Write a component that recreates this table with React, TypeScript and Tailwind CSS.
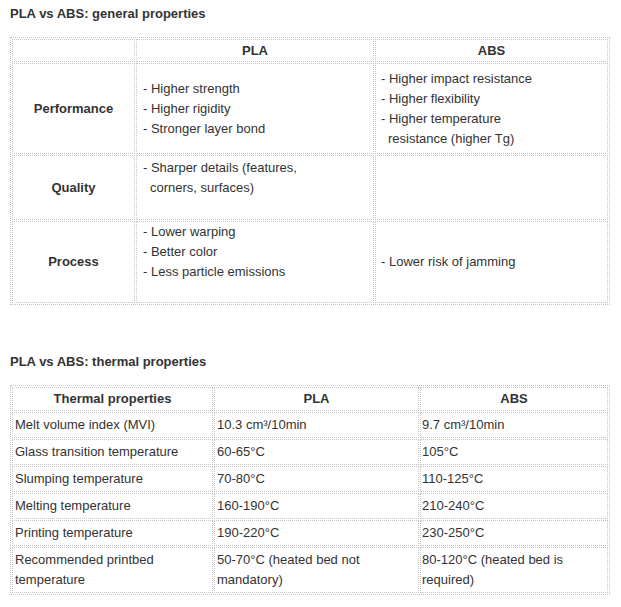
// PLA vs ABS comparison tables — general + thermal properties
const cell = 'border border-dotted border-[#c4c4c4] p-0';

const GENERAL = [
  {
    label: 'Performance',
    height: 'h-[91px]',
    pla: ['- Higher strength', '- Higher rigidity', '- Stronger layer bond'],
    abs: ['- Higher impact resistance', '- Higher flexibility', '- Higher temperature resistance (higher Tg)'],
  },
  {
    label: 'Quality',
    height: 'h-[65px]',
    pla: ['- Sharper details (features, corners, surfaces)', ''],
    abs: [],
  },
  {
    label: 'Process',
    height: 'h-[81px]',
    pla: ['- Lower warping', '- Better color', '- Less particle emissions', ''],
    abs: ['- Lower risk of jamming'],
  },
];

const THERMAL: [string, string, string][] = [
  ['Melt volume index (MVI)', '10.3 cm³/10min', '9.7 cm³/10min'],
  ['Glass transition temperature', '60-65°C', '105°C'],
  ['Slumping temperature', '70-80°C', '110-125°C'],
  ['Melting temperature', '160-190°C', '210-240°C'],
  ['Printing temperature', '190-220°C', '230-250°C'],
  ['Recommended printbed temperature', '50-70°C (heated bed not mandatory)', '80-120°C (heated bed is required)'],
];

function Lines({ items }: { items: string[] }) {
  return (
    <div>
      {items.map((t, i) => (
        <div key={i} className="pl-[7px] -indent-[7px] min-h-[20px]">
          {t}
        </div>
      ))}
    </div>
  );
}

export default function App() {
  return (
    <div className="bg-white text-[#333] text-[13px] leading-[20px] font-['Liberation_Sans',Arial,sans-serif] px-[10px] pt-[4px] pb-[12px]">
      <h2 className="font-bold leading-[20px]">PLA vs ABS: general properties</h2>

      <table className="mt-[13px] w-[600px] table-fixed border-separate border-spacing-[1px] border border-dotted border-[#c4c4c4]">
        <colgroup>
          <col className="w-[123px]" />
          <col className="w-[238px]" />
          <col className="w-[233px]" />
        </colgroup>
        <tbody>
          <tr>
            <td className={`${cell} h-[23px]`} />
            <td className={`${cell} h-[23px] text-center font-bold align-middle`}>PLA</td>
            <td className={`${cell} h-[23px] text-center font-bold align-middle`}>ABS</td>
          </tr>
          {GENERAL.map((row) => (
            <tr key={row.label}>
              <td className={`${cell} ${row.height} text-center font-bold align-middle`}>{row.label}</td>
              <td className={`${cell} ${row.height} pl-[6px] pr-[30px] align-middle`}>
                <Lines items={row.pla} />
              </td>
              <td className={`${cell} ${row.height} pl-[5px] pr-[50px] align-middle`}>
                <Lines items={row.abs} />
              </td>
            </tr>
          ))}
        </tbody>
      </table>

      <h2 className="mt-[47px] font-bold leading-[20px]">PLA vs ABS: thermal properties</h2>

      <table className="mt-[13px] w-[600px] table-fixed border-separate border-spacing-[1px] border border-dotted border-[#c4c4c4]">
        <colgroup>
          <col className="w-[201px]" />
          <col className="w-[205px]" />
          <col className="w-[188px]" />
        </colgroup>
        <tbody>
          <tr>
            <th className={`${cell} h-[24px] font-bold text-center align-middle`}>Thermal properties</th>
            <th className={`${cell} h-[24px] font-bold text-center align-middle`}>PLA</th>
            <th className={`${cell} h-[24px] font-bold text-center align-middle`}>ABS</th>
          </tr>
          {THERMAL.map(([prop, pla, abs]) => (
            <tr key={prop}>
              <td className={`${cell} h-[26px] px-[2px] py-[2px] align-middle`}>{prop}</td>
              <td className={`${cell} h-[26px] px-[2px] py-[2px] align-middle`}>{pla}</td>
              <td className={`${cell} h-[26px] px-[1px] py-[2px] align-middle`}>{abs}</td>
            </tr>
          ))}
        </tbody>
      </table>
    </div>
  );
}
